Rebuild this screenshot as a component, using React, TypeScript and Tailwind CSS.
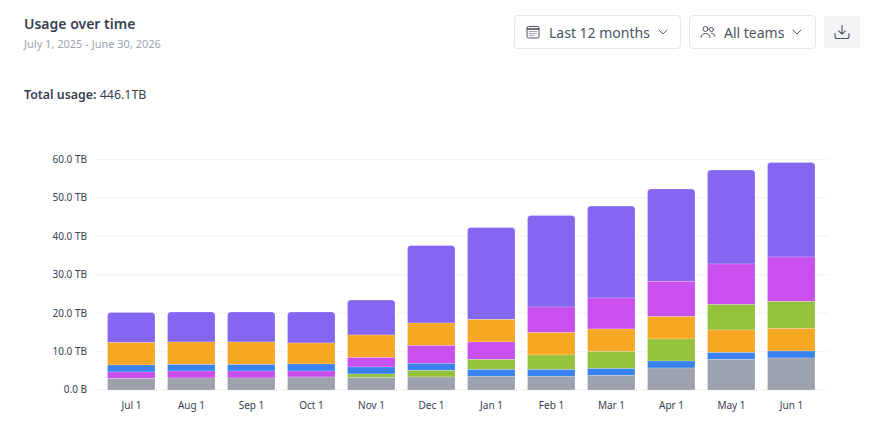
import { ChevronDown } from "lucide-react"

const colors: Record<string, string> = {
  purple: "#8466f0",
  pink: "#c94fee",
  orange: "#f6a723",
  green: "#95c23d",
  blue: "#3a82ee",
  gray: "#9ca3af",
}

// y values of each segment's top edge, top of stack first
const bars = [
  { label: "Jul 1", stack: [["purple", 312.5], ["orange", 342.5], ["blue", 365], ["pink", 372], ["gray", 378.5]] },
  { label: "Aug 1", stack: [["purple", 312], ["orange", 342], ["blue", 364.5], ["pink", 371], ["gray", 378]] },
  { label: "Sep 1", stack: [["purple", 312], ["orange", 342], ["blue", 364.5], ["pink", 371], ["gray", 378]] },
  { label: "Oct 1", stack: [["purple", 312], ["orange", 343], ["blue", 364], ["pink", 371], ["gray", 377]] },
  { label: "Nov 1", stack: [["purple", 300], ["orange", 335], ["pink", 357.5], ["blue", 367], ["green", 374], ["gray", 377.5]] },
  { label: "Dec 1", stack: [["purple", 245.5], ["orange", 323], ["pink", 345.5], ["blue", 363.5], ["green", 370.5], ["gray", 377]] },
  { label: "Jan 1", stack: [["purple", 227.5], ["orange", 319.5], ["pink", 342], ["green", 359.5], ["blue", 369.5], ["gray", 376.5]] },
  { label: "Feb 1", stack: [["purple", 215.5], ["pink", 307], ["orange", 332.5], ["green", 355], ["blue", 369.5], ["gray", 376.5]] },
  { label: "Mar 1", stack: [["purple", 206], ["pink", 298], ["orange", 329], ["green", 351.5], ["blue", 368.5], ["gray", 375.5]] },
  { label: "Apr 1", stack: [["purple", 189], ["pink", 281.5], ["orange", 316.5], ["green", 339], ["blue", 361], ["gray", 368]] },
  { label: "May 1", stack: [["purple", 170], ["pink", 264], ["green", 304.5], ["orange", 330], ["blue", 352.5], ["gray", 359.5]] },
  { label: "Jun 1", stack: [["purple", 162.5], ["pink", 257], ["green", 301.5], ["orange", 328.5], ["blue", 351], ["gray", 358]] },
] as { label: string; stack: [string, number][] }[]

const ticks = ["60.0 TB", "50.0 TB", "40.0 TB", "30.0 TB", "20.0 TB", "10.0 TB", "0.0 B"]
const baseY = 390
const chartTop = 130

function topRounded(x: number, y: number, w: number, h: number, r: number) {
  return `M${x} ${y + h}V${y + r}Q${x} ${y} ${x + r} ${y}H${x + w - r}Q${x + w} ${y} ${x + w} ${y + r}V${y + h}Z`
}

function Chart() {
  return (
    <svg width="875" height="301" viewBox={`0 ${chartTop} 875 301`} className="block">
      {ticks.map((t, i) => {
        const y = 159.5 + i * 38.4
        return (
          <g key={t}>
            <line x1="95" x2="828" y1={y} y2={y} stroke="#f3f4f6" strokeWidth="1.2" />
            <text x="87" y={y + 3.5} textAnchor="end" fontSize="10" fill="#374151">
              {t}
            </text>
          </g>
        )
      })}
      {bars.map((bar, i) => {
        const x = 107.5 + i * 60
        return (
          <g key={bar.label}>
            {bar.stack.map(([name, y], j) => {
              const next = j + 1 < bar.stack.length ? bar.stack[j + 1][1] : baseY
              const d = j === 0 ? topRounded(x, y, 47.5, next - y, 3.5) : `M${x} ${y}H${x + 47.5}V${next}H${x}Z`
              return <path key={name} d={d} fill={colors[name]} stroke="#ffffff" strokeOpacity="0.3" strokeWidth="0.7" />
            })}
            <text x={x + 24} y="409" textAnchor="middle" fontSize="10" fill="#374151">
              {bar.label}
            </text>
          </g>
        )
      })}
    </svg>
  )
}

function CalendarIcon() {
  return (
    <svg width="14" height="14" viewBox="0 0 14 14" fill="none" stroke="#4b5563" strokeWidth="1">
      <rect x="1" y="1.5" width="12" height="11.5" rx="1.5" />
      <path d="M1 4h12" strokeWidth="1.6" />
      <path d="M3.5 6.5h7M3.5 8.5h7M3.5 10.5h5" strokeDasharray="1 1" />
    </svg>
  )
}

function TeamIcon() {
  return (
    <svg width="16" height="14" viewBox="0 0 16 14" fill="none" stroke="#4b5563" strokeWidth="1" strokeLinecap="round">
      <circle cx="5.5" cy="4" r="2.5" />
      <path d="M1 12.5c0-2.6 2-4 4.5-4s4.5 1.4 4.5 4" />
      <circle cx="11.5" cy="4.5" r="2" />
      <path d="M11.5 8.2c2 0 3.5 1.2 3.5 3.3" />
    </svg>
  )
}

function DownloadIcon() {
  return (
    <svg width="16" height="16" viewBox="0 0 16 16" fill="none" stroke="#4b5563" strokeWidth="1.1" strokeLinecap="round" strokeLinejoin="round">
      <path d="M8 1.5v8.5M4.8 7l3.2 3.2L11.2 7" />
      <path d="M1 9.5v3a2 2 0 0 0 2 2h10a2 2 0 0 0 2-2v-3" />
    </svg>
  )
}

export default function App() {
  return (
    <div className="w-[875px] h-[431px] overflow-hidden bg-white text-[#374151] font-['Noto_Sans',sans-serif]">
      <div className="flex items-start justify-between pl-6 pr-[15px] pt-[15px]">
        <div>
          <h1 className="text-[14px] leading-[18px] font-semibold">Usage over time</h1>
          <p className="mt-1 text-[11px] leading-[14px] text-[#9ca3af]">July 1, 2025 - June 30, 2026</p>
        </div>
        <div className="flex items-center gap-2">
          <button className="flex h-[34px] w-[167px] items-center rounded border border-[#e5e7eb] pl-[11px] text-[14px] text-[#4b5563]">
            <CalendarIcon />
            <span className="ml-[9px]">Last 12 months</span>
            <ChevronDown className="ml-[5px] h-[16px] w-[16px]" strokeWidth={1.4} />
          </button>
          <button className="flex h-[34px] w-[127px] items-center rounded border border-[#e5e7eb] pl-[10px] text-[14px] text-[#4b5563]">
            <TeamIcon />
            <span className="ml-[8px]">All teams</span>
            <ChevronDown className="ml-[5px] h-[16px] w-[16px]" strokeWidth={1.4} />
          </button>
          <button className="flex h-8 w-9 items-center justify-center rounded bg-[#f3f4f6]">
            <DownloadIcon />
          </button>
        </div>
      </div>
      <p className="mt-[36px] pl-6 text-[12.4px] leading-[16px]">
        <span className="font-semibold">Total usage:</span> 446.1TB
      </p>
      <div className="mt-[27px]">
        <Chart />
      </div>
    </div>
  )
}
